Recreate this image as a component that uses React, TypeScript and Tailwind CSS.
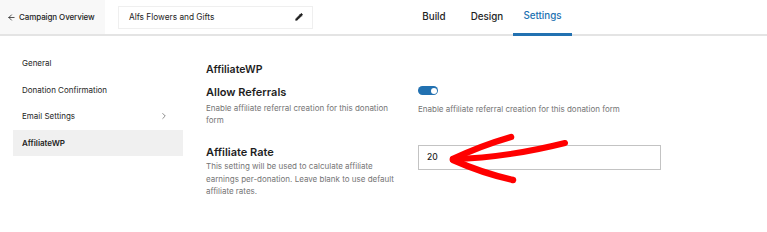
import { ArrowLeft, ChevronRight, Pencil } from "lucide-react";

const navItems = ["General", "Donation Confirmation", "Email Settings", "AffiliateWP"];

export default function App() {
  return (
    <div className="relative w-[767px] h-[232px] overflow-hidden bg-white text-[#1e1e1e] font-['Inter',sans-serif]">
      {/* Top bar */}
      <header className="flex h-[36px] items-stretch border-b-2 border-[#e4e4e4]">
        <div className="flex w-[105px] items-center gap-[3px] whitespace-nowrap bg-[#f8f8f8] pl-[7px] text-[8px] font-medium tracking-[-0.1px]">
          <ArrowLeft className="h-[9px] w-[9px]" strokeWidth={2} />
          <span>Campaign Overview</span>
        </div>
        <div className="flex items-center pl-[13px]">
          <div className="flex h-[23px] w-[195px] items-center justify-between border border-[#efefef] pl-[10px] pr-[9px] text-[8.3px]">
            <span>Alfs Flowers and Gifts</span>
            <Pencil className="h-[8px] w-[8px] fill-[#1e1e1e]" strokeWidth={2.5} />
          </div>
        </div>
        <nav className="ml-[98px] flex items-stretch text-[9.8px] font-medium">
          <div className="flex w-[46px] items-center justify-center">Build</div>
          <div className="ml-[7px] flex w-[46px] items-center justify-center">Design</div>
          <div className="ml-[3px] -mb-[2px] flex w-[59px] items-center justify-center border-b-[3px] border-[#2271b1] text-[#2271b1]">
            Settings
          </div>
        </nav>
      </header>

      <div className="flex">
        {/* Sidebar */}
        <aside className="w-[195px] pl-[13px] pt-[14px]">
          {navItems.map((item, i) => (
            <div
              key={item}
              className={`flex h-[26.5px] w-[170px] items-center justify-between pl-[9px] pr-[14px] text-[8px] ${
                i === 3 ? "bg-[#f0f0f0] font-semibold" : ""
              }`}
            >
              <span>{item}</span>
              {item === "Email Settings" && <ChevronRight className="h-[10px] w-[10px] text-[#757575]" />}
            </div>
          ))}
        </aside>

        {/* Content */}
        <main className="flex-1 pl-[11px] pt-[27px]">
          <h2 className="text-[10.5px] font-semibold leading-[14px]">AffiliateWP</h2>

          <div className="mt-[8px] grid grid-cols-[212px_243px]">
            <div>
              <div className="text-[11px] font-semibold leading-[14px]">Allow Referrals</div>
              <p className="mt-[3px] w-[190px] text-[8px] leading-[12px] text-[#757575]">
                Enable affiliate referral creation for this donation form
              </p>
            </div>
            <div className="pt-[1px]">
              <div className="flex h-[9px] w-[20px] items-center justify-end rounded-full bg-[#2271b1] pr-[1.5px]">
                <div className="h-[6px] w-[6px] rounded-full bg-white" />
              </div>
              <p className="mt-[8px] whitespace-nowrap text-[8px] leading-[12px] text-[#757575]">
                Enable affiliate referral creation for this donation form
              </p>
            </div>
          </div>

          <div className="mt-[19px] grid grid-cols-[212px_243px]">
            <div>
              <div className="text-[11px] font-semibold leading-[14px]">Affiliate Rate</div>
              <p className="mt-[1px] w-[188px] text-[8px] leading-[12.5px] text-[#757575]">
                This setting will be used to calculate affiliate earnings per-donation. Leave blank to use default
                affiliate rates.
              </p>
            </div>
            <div>
              <div className="flex h-[25px] w-[243px] items-center border border-[#c3c3c3] pl-[8px] text-[8.5px] font-medium">
                20
              </div>
            </div>
          </div>
        </main>
      </div>

      {/* Hand-drawn annotation arrow */}
      <svg className="pointer-events-none absolute left-0 top-0" width="767" height="232" viewBox="0 0 767 232">
        <g fill="none" stroke="#ff0000" strokeLinecap="round" strokeLinejoin="round">
          <path d="M453 159 Q 505 158 565 143" strokeWidth="6" />
          <path d="M453 159 Q 480 146 511 137" strokeWidth="6.5" />
          <path d="M453 160 Q 482 173 513 180" strokeWidth="6.5" />
        </g>
      </svg>
    </div>
  );
}
